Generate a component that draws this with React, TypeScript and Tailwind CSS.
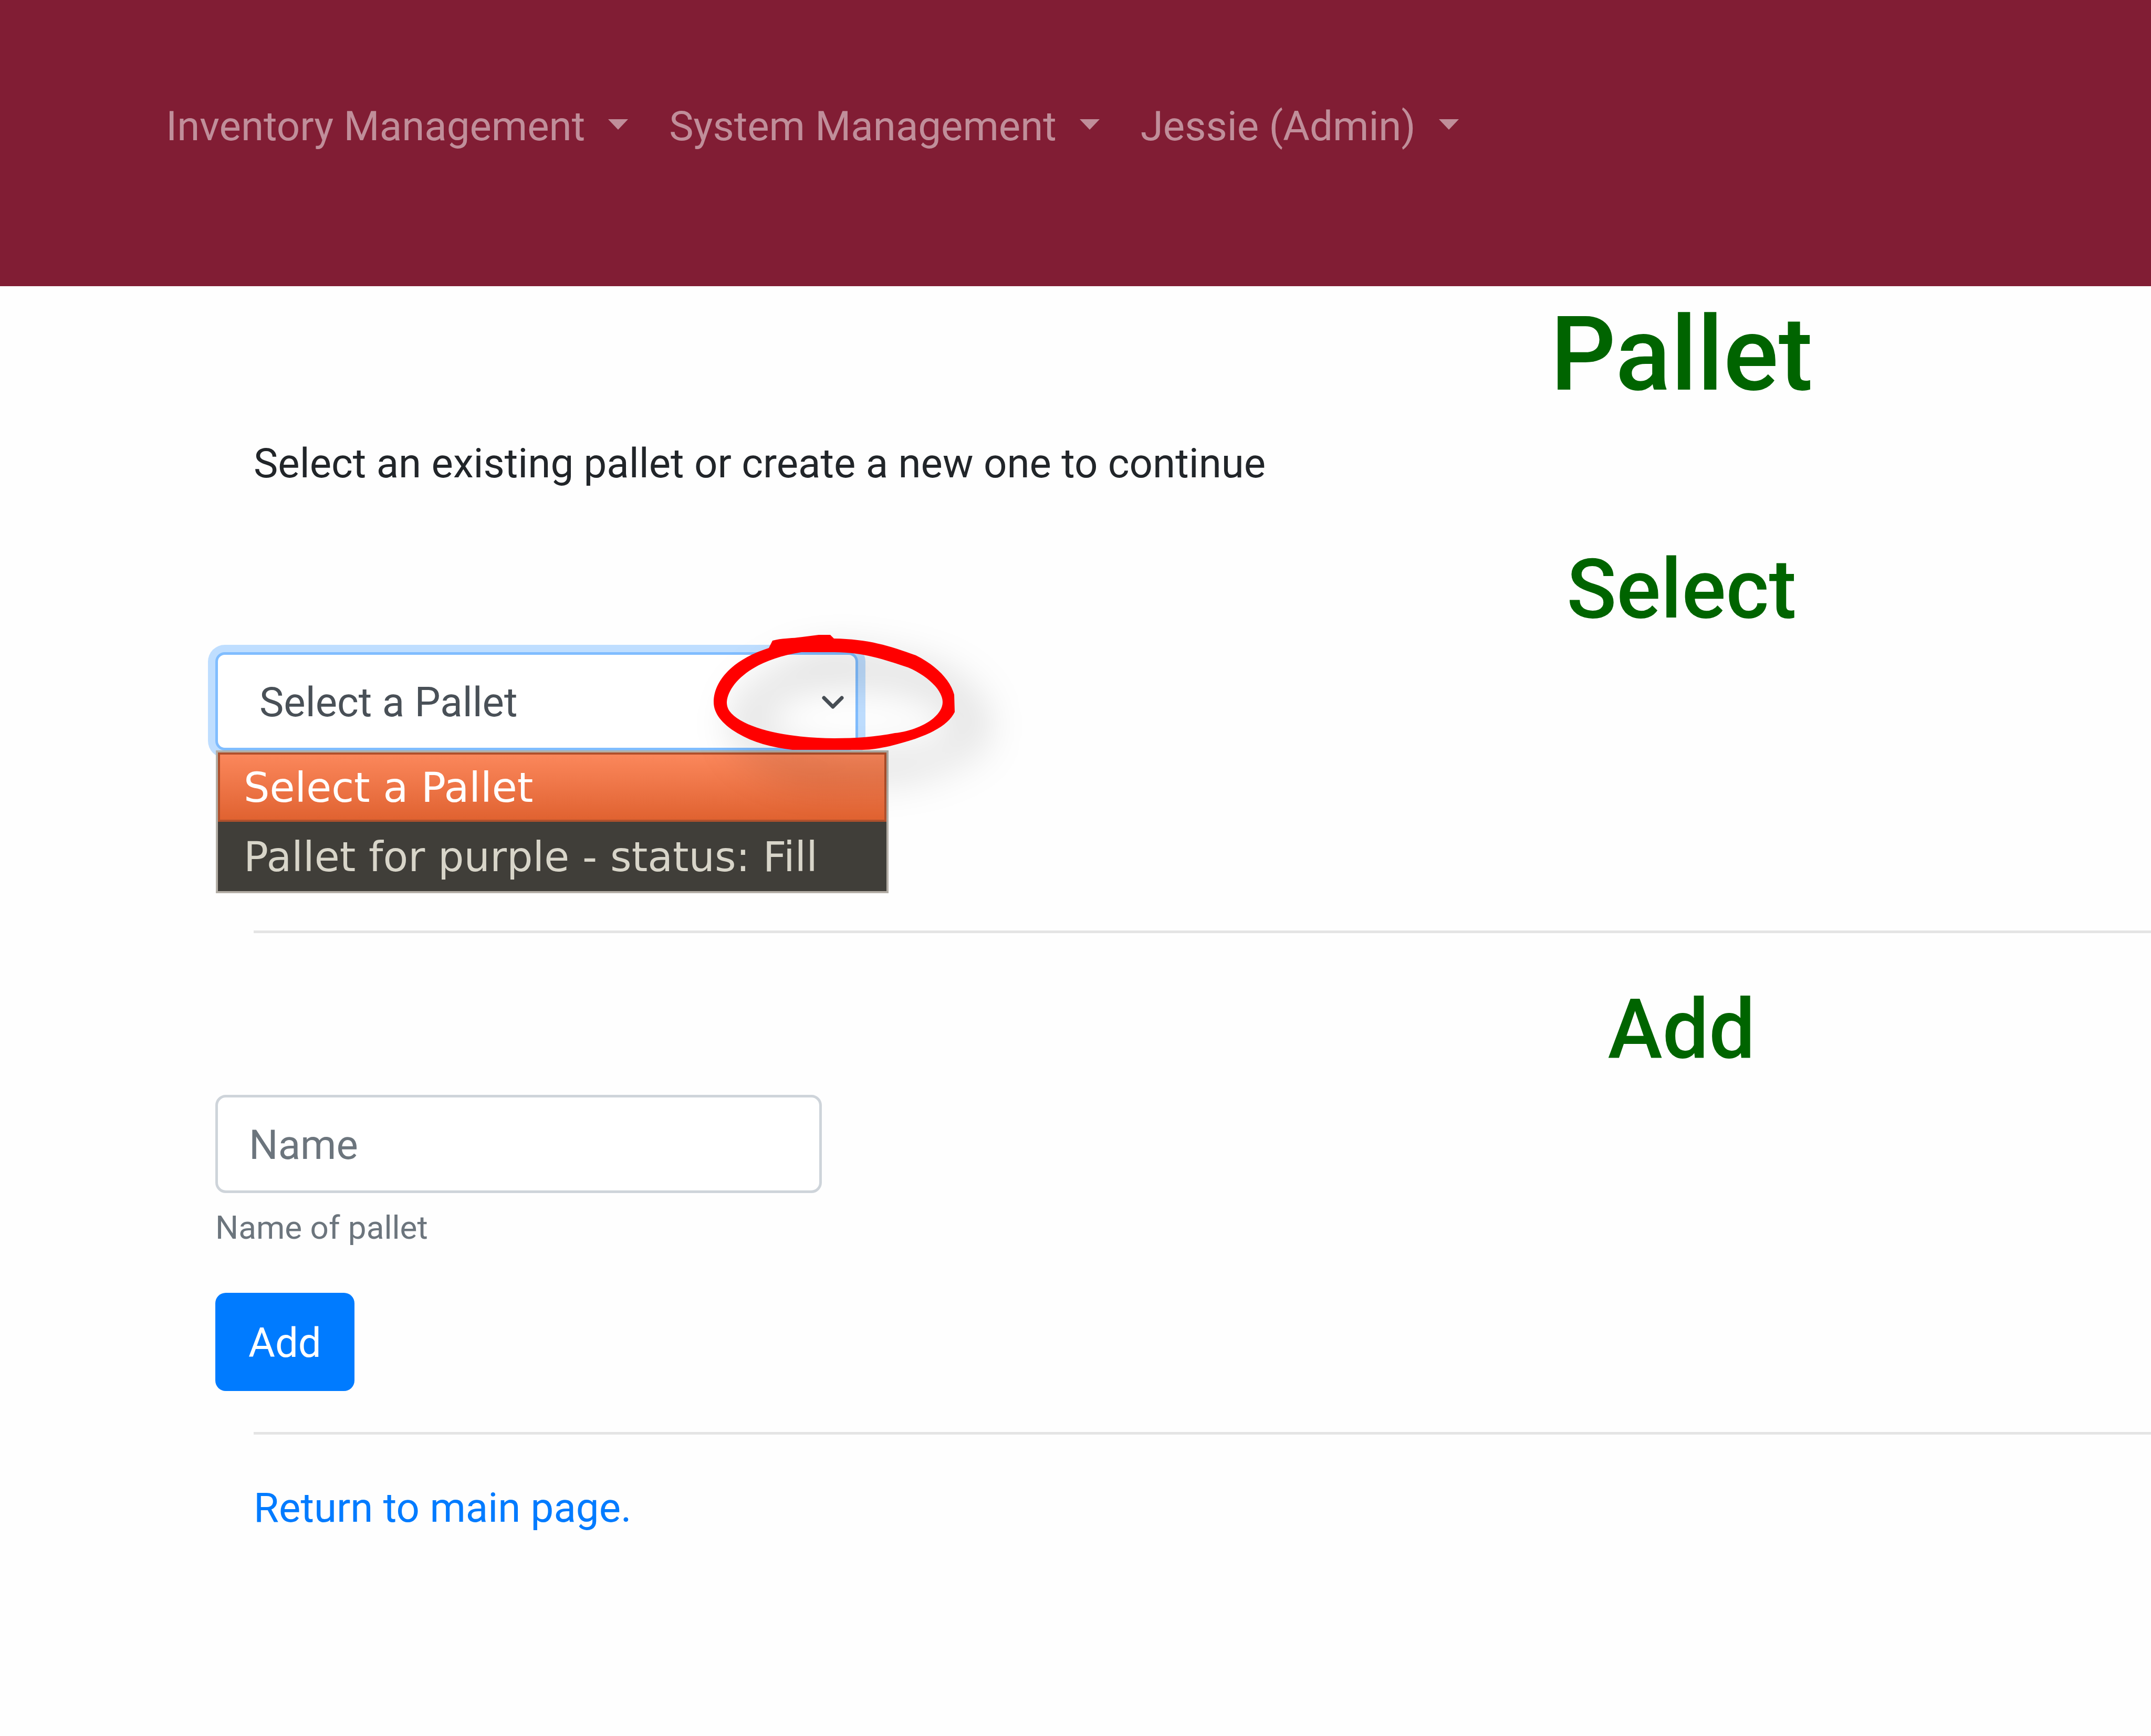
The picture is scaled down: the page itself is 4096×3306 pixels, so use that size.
import { useState } from "react";

const MENUS = ["Inventory Management", "System Management", "Jessie (Admin)"];
const PALLETS = ["Select a Pallet", "Pallet for purple - status: Fill"];

function NavMenu({ label }: { label: string }) {
  return (
    <button
      type="button"
      aria-haspopup="menu"
      className="flex items-center gap-[44px] whitespace-nowrap text-white/50"
    >
      {label}
      <svg className="mb-2 h-[20px] w-[38px]" viewBox="0 0 38 20" fill="currentColor" aria-hidden="true">
        <path d="M0 0H38L19 20Z" />
      </svg>
    </button>
  );
}

function Divider() {
  return <hr className="ml-[483px] border-0 border-t-[5px] border-black/10" />;
}

function SectionTitle({ children }: { children: string }) {
  return (
    <h2 className="pl-[2308px] text-center text-[157px] leading-[188px] font-medium text-[#006400]">
      {children}
    </h2>
  );
}

/* Hand-drawn red ring that calls out the drop-down arrow. */
function ArrowCallout() {
  const ring =
    "M105 161C105 125 135 82 210 58L217 44C235 39 250 40 265 38L305 33H327L334 40C400 41 440 54 490 72C530 92 556 120 563 147L564 180C550 208 510 228 440 245C420 249 405 252 390 252H255C215 247 180 238 150 220C120 202 105 182 105 161ZM130 161C130 166 131 172 135 178C160 212 250 230 335 230C375 230 415 227 450 220C495 215 541 190 541 161C541 140 515 112 475 95C430 80 390 66 335 66H272C180 80 133 125 130 161Z";
  return (
    <svg
      className="pointer-events-none absolute -top-[66px] left-[844px] z-20 h-[549px] w-[784px] overflow-visible"
      viewBox="0 0 784 549"
      fillRule="evenodd"
      aria-hidden="true"
    >
      <defs>
        <filter id="ring-shadow" x="-50%" y="-100%" width="200%" height="300%" colorInterpolationFilters="sRGB">
          <feGaussianBlur stdDeviation="40" />
        </filter>
      </defs>
      <path d={ring} transform="translate(48 44)" fill="#000" fillOpacity="0.28" filter="url(#ring-shadow)" />
      <path d={ring} fill="#f00" />
    </svg>
  );
}

function PalletSelect() {
  const [value, setValue] = useState(PALLETS[0]);
  return (
    <div className="relative ml-[410px] w-[1224px]">
      <select
        aria-label="Pallet"
        value={value}
        onChange={(e) => setValue(e.target.value)}
        className="block h-[187px] w-full appearance-none rounded-[18px] border-[5px] border-[#80bdff] bg-white pt-[4px] pl-[79px] text-[#495057] ring-[14px] ring-[#bfdeff] outline-none"
      >
        {PALLETS.map((p) => (
          <option key={p}>{p}</option>
        ))}
      </select>
      <svg
        className="pointer-events-none absolute top-[81px] right-[24px] h-[30px] w-[48px]"
        viewBox="0 0 48 30"
        fill="none"
        stroke="#495057"
        strokeWidth="7"
        strokeLinecap="round"
        strokeLinejoin="round"
        aria-hidden="true"
      >
        <path d="M7 6L24 23L41 6" />
      </svg>
      <ul
        role="listbox"
        aria-label="Pallet options"
        className="absolute top-[187px] left-px z-10 w-[1281px] border-[4px] border-[#b3aea6] bg-[#403e39] font-['DejaVu_Sans'] text-[78px] leading-[122px] whitespace-nowrap text-[#d8d5c9]"
      >
        {PALLETS.map((p) => (
          <li
            key={p}
            role="option"
            aria-selected={p === value}
            className="border-[4px] border-transparent px-[45px] pt-[2px] aria-selected:border-[#b0502c] aria-selected:bg-linear-to-b aria-selected:from-[#fb875b] aria-selected:to-[#e06230] aria-selected:text-white"
          >
            {p}
          </li>
        ))}
      </ul>
      <ArrowCallout />
    </div>
  );
}

export default function App() {
  return (
    <div className="min-h-screen overflow-hidden bg-[#fefefe] font-[Roboto] text-[78px] leading-[117px] text-[#212529]">
      <nav className="flex gap-[78px] bg-[#811d34] pt-[182px] pb-[246px] pl-[316px]">
        {MENUS.map((m) => (
          <NavMenu key={m} label={m} />
        ))}
      </nav>
      <main>
        <h1 className="mt-[13px] pl-[2308px] text-center text-[196px] leading-[235px] font-medium text-[#006400]">
          Pallet
        </h1>
        <p className="mt-[31px] mb-[87px] pl-[483px]">
          Select an existing pallet or create a new one to continue
        </p>
        <SectionTitle>Select</SectionTitle>
        <div className="mt-[26px] mb-[343px]">
          <PalletSelect />
        </div>
        <Divider />
        <form className="mt-[89px] mb-[78px]" onSubmit={(e) => e.preventDefault()}>
          <SectionTitle>Add</SectionTitle>
          <div className="mt-[31px] flex flex-col items-start pl-[410px]">
            <input
              id="pallet-name"
              type="text"
              placeholder="Name"
              aria-describedby="pallet-name-help"
              aria-label="Name"
              className="h-[187px] w-[1155px] rounded-[20px] border-[5px] border-[#ced4da] bg-white px-[59px] pt-[4px] placeholder:text-[#6c757d]"
            />
            <small id="pallet-name-help" className="mt-[19px] text-[62px] leading-[93px] text-[#6c757d]">
              Name of pallet
            </small>
            <button
              type="submit"
              className="mt-[78px] h-[187px] rounded-[20px] bg-[#007bff] px-[63px] pt-[4px] text-white"
            >
              Add
            </button>
          </div>
        </form>
        <Divider />
        <p className="mt-[81px] pl-[483px]">
          <a href="#main" className="text-[#007bff]">
            Return to main page.
          </a>
        </p>
      </main>
    </div>
  );
}
